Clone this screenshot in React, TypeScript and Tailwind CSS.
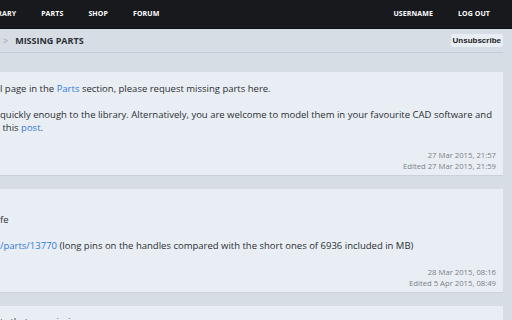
import React from "react";

const Dates = ({ a, b }: { a: string; b: string }) => (
  <div className="flex flex-col items-end text-[7.7px] leading-[11px] text-[#7b7f85]">
    <span>{a}</span>
    <span>{b}</span>
  </div>
);

export default function App() {
  return (
    <div className="w-[512px] h-[320px] overflow-hidden bg-[#d6dde4] font-['Open_Sans',sans-serif] text-[#2b2e33]">
      <nav className="h-[29px] bg-[#18191c] flex items-center justify-between text-[7px] font-bold text-white tracking-[0.1px] border-b border-[#0e0f10]">
        <div className="flex items-center gap-[25px] ml-[-14px]">
          <span>LIBRARY</span>
          <span>PARTS</span>
          <span>SHOP</span>
          <span>FORUM</span>
        </div>
        <div className="flex items-center gap-[25px] mr-[22px]">
          <span>USERNAME</span>
          <span>LOG OUT</span>
        </div>
      </nav>
      <main className="mr-[9px]">
        <div className="h-[24px] flex items-center justify-between border-b border-[#c4ccd5]">
          <div className="flex items-center">
            <span className="ml-[3px] text-[9px] text-[#9aa1a8]">&gt;</span>
            <span className="ml-[7px] text-[9px] font-bold text-[#2d3035]">MISSING PARTS</span>
          </div>
          <button className="h-[13px] px-[2px] rounded-[2px] bg-[#e9eef5] font-['Liberation_Sans',sans-serif] font-bold text-[8px] leading-[13px] text-[#222]">
            Unsubscribe
          </button>
        </div>

        <section className="mt-[19px] h-[104px] bg-[#e9eef5] border-b border-[#c9d1d9] pr-[7px] pt-[10px] flex flex-col text-[9.5px] leading-[13px] whitespace-nowrap">
          <p>
            l page in the <a className="text-[#2f7ad6]">Parts</a> section, please request missing parts here.
          </p>
          <p className="mt-[13px]">
            quickly enough to the library. Alternatively, you are welcome to model them in your favourite CAD software and
          </p>
          <p>
            &nbsp;this <a className="text-[#2f7ad6]">post</a>.
          </p>
          <div className="mt-auto mb-[3px]">
            <Dates a="27 Mar 2015, 21:57" b="Edited 27 Mar 2015, 21:59" />
          </div>
        </section>

        <section className="mt-[13px] h-[104px] bg-[#e9eef5] border-b border-[#c9d1d9] pr-[7px] pt-[24px] flex flex-col text-[9.5px] leading-[13px] whitespace-nowrap">
          <p>fe</p>
          <p className="mt-[13px]">
            <a className="text-[#2f7ad6]">/parts/13770</a> (long pins on the handles compared with the short ones of 6936 included in MB)
          </p>
          <div className="mt-auto mb-[3px]">
            <Dates a="28 Mar 2015, 08:16" b="Edited 5 Apr 2015, 08:49" />
          </div>
        </section>

        <section className="mt-[13px] h-[60px] bg-[#e9eef5] pt-[9px] text-[9.5px] leading-[13px] whitespace-nowrap">
          <p>ts that are missing</p>
        </section>
      </main>
    </div>
  );
}
